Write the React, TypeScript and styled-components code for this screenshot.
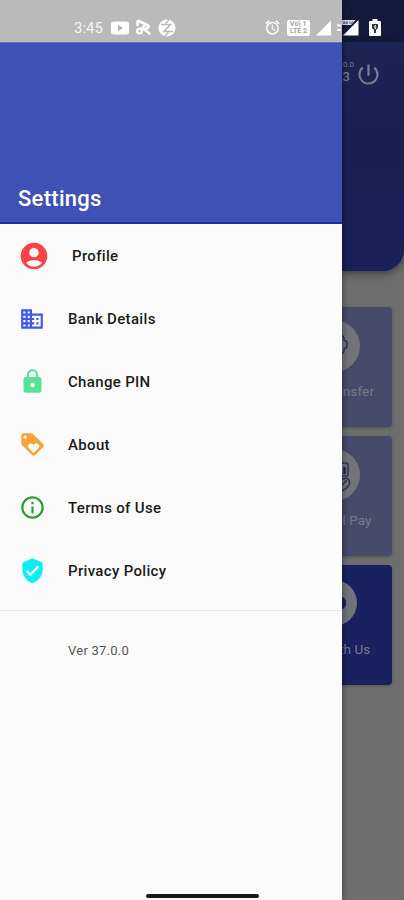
import React from "react";
import styled, { createGlobalStyle } from "styled-components";
import {
  MdAccountCircle,
  MdAlarm,
  MdDomain,
  MdInfoOutline,
  MdLock,
  MdLoyalty,
  MdPowerSettingsNew,
  MdVerifiedUser,
} from "react-icons/md";

const GlobalStyle = createGlobalStyle`
  * { box-sizing: border-box; }
  body { margin: 0; background: #6e6e6e; font-family: Roboto, sans-serif; }
`;

const Screen = styled.div`
  display: flex;
  width: 404px;
  height: 900px;
  overflow: hidden;
`;

const Drawer = styled.aside`
  position: relative;
  z-index: 1;
  display: flex;
  flex-direction: column;
  flex: 0 0 342px;
  background: #fbfbfb;
  box-shadow: 0 0 7px rgba(0, 0, 0, 0.5);
`;

const StatusBar = styled.div<{ $dark?: boolean }>`
  display: flex;
  align-items: center;
  flex: 0 0 42px;
  height: 42px;
  padding: ${(p) => (p.$dark ? "13px 0 0" : "13px 1px 0 74px")};
  background: ${(p) => (p.$dark ? "#151a3c" : "#bababa")};
  color: #fff;
  svg { display: block; flex: none; }
`;

const Clock = styled.span`
  width: 37px;
  font-size: 15px;
  line-height: 18px;
  color: #f4f4f4;
`;

const StatusGroup = styled.div<{ $gap: number; $end?: boolean }>`
  display: flex;
  align-items: center;
  gap: ${(p) => p.$gap}px;
  margin-left: ${(p) => (p.$end ? "auto" : "0")};
`;

const LteBadge = styled.span`
  display: grid;
  width: 23px;
  height: 16px;
  align-content: center;
  justify-content: center;
  border-radius: 2px;
  background: #fff;
  color: #a5a5a5;
  font-size: 7px;
  font-weight: 700;
  line-height: 7px;
  white-space: nowrap;
`;

const DrawerHeader = styled.header`
  display: flex;
  align-items: flex-end;
  flex: 0 0 182px;
  padding: 0 18px 10px;
  border-top: 1px solid #6571bd;
  border-bottom: 2px solid #1c2ca0;
  background: #4051b5;
`;

const Title = styled.h1`
  margin: 0;
  color: #fff;
  font-size: 22px;
  font-weight: 500;
  line-height: 26px;
  letter-spacing: 0.28px;
`;

const Menu = styled.nav`
  display: flex;
  flex-direction: column;
  padding-bottom: 8px;
  border-bottom: 1px solid #ececec;
`;

const MenuItem = styled.a<{ $color: string }>`
  display: flex;
  align-items: center;
  height: 63px;
  padding-left: 20px;
  svg { flex: none; color: ${(p) => p.$color}; display: block; }
`;

const IconSlot = styled.span<{ $wide?: boolean }>`
  display: flex;
  flex: none;
  width: ${(p) => (p.$wide ? 28 : 24)}px;
  margin-right: 24px;
  justify-content: center;
`;

const Label = styled.span`
  color: #1c1c1c;
  font-size: 15px;
  font-weight: 500;
  line-height: 20px;
  letter-spacing: 0.33px;
  white-space: nowrap;
`;

const Version = styled.p`
  margin: 31px 0 0 68px;
  color: #555;
  font-size: 13px;
  line-height: 18px;
  letter-spacing: 0.25px;
`;

const HomeBar = styled.div`
  width: 113px;
  height: 4px;
  margin: auto 0 2px 146px;
  border-radius: 2px;
  background: #161616;
`;

const Backdrop = styled.main`
  display: flex;
  flex-direction: column;
  flex: 0 0 62px;
  overflow: hidden;
  background: #6e6e6e;
`;

const HomeHeader = styled.section`
  display: flex;
  flex: 0 0 229px;
  align-items: flex-start;
  justify-content: flex-end;
  gap: 1px;
  padding: 18px 22px 0 0;
  border-radius: 0 0 21px 0;
  background: linear-gradient(#1b2453, #192153 40%, #192158);
  box-shadow: 0 2px 9px rgba(0, 0, 0, 0.5);
  color: #787b8b;
  svg { flex: none; margin-top: 1px; }
`;

const Build = styled.div`
  text-align: right;
  white-space: nowrap;
  small { display: block; font-size: 8px; line-height: 9px; }
  b { display: block; padding-right: 4px; font-size: 13px; font-weight: 500; line-height: 15px; }
`;

const Tiles = styled.section`
  display: flex;
  flex-direction: column;
  align-items: flex-end;
  gap: 9px;
  padding: 36px 12px 0 0;
`;

const Tile = styled.article<{ $solid?: boolean }>`
  display: flex;
  flex: none;
  flex-direction: column;
  align-items: center;
  width: 116px;
  height: 120px;
  padding-top: ${(p) => (p.$solid ? "15px" : "13px")};
  border-radius: 4px;
  background: ${(p) => (p.$solid ? "#1a2160" : "#474a69")};
  box-shadow: 0 1px 3px rgba(0, 0, 0, 0.25);
`;

const Disc = styled.div<{ $size: number }>`
  width: ${(p) => p.$size}px;
  height: ${(p) => p.$size}px;
  border-radius: 50%;
  background: #73747a;
  svg { display: block; width: 100%; height: 100%; }
`;

const TileLabel = styled.span<{ $top: number; $trim?: number }>`
  margin-top: ${(p) => p.$top}px;
  padding-right: ${(p) => p.$trim ?? 0}px;
  color: #777a88;
  font-size: 13.5px;
  font-weight: 400;
  line-height: 18px;
  letter-spacing: 0.1px;
  white-space: nowrap;
`;

const items = [
  { label: "Profile", icon: MdAccountCircle, color: "#fb4246", size: 32, wide: true },
  { label: "Bank Details", icon: MdDomain, color: "#3f57ec", size: 26 },
  { label: "Change PIN", icon: MdLock, color: "#55e495", size: 27 },
  { label: "About", icon: MdLoyalty, color: "#faa235", size: 27 },
  { label: "Terms of Use", icon: MdInfoOutline, color: "#2d9d32", size: 27 },
  { label: "Privacy Policy", icon: MdVerifiedUser, color: "#08eef5", size: 27 },
];

const YoutubeIcon = () => (
  <svg width="18" height="14" viewBox="0 0 18 14">
    <rect y="0.5" width="18" height="13" rx="3" fill="#fff" />
    <path d="M7 4v6l5-3z" fill="#b0b0b0" />
  </svg>
);

const ShareIcon = () => (
  <svg width="17" height="17" viewBox="0 0 17 17" fill="none" stroke="#fff" strokeLinejoin="round" strokeLinecap="round">
    <path d="M2.500 6V3q0-1.500 1.500-1L13 6.500q1.500 1 0 2L9.500 10.500" strokeWidth="2.600" />
    <circle cx="4.500" cy="12" r="2.400" strokeWidth="2.400" />
    <path d="M6.500 10.500L9 7M9.500 10.500l5 4" strokeWidth="2.400" />
  </svg>
);

const ZIcon = () => (
  <svg width="18" height="18" viewBox="0 0 18 18">
    <circle cx="9" cy="9" r="8.5" fill="#fff" />
    <path d="M3 5.500h9.500L6 12.500h9M11 1L7.500 4.500M10.500 13.500L7 17" fill="none" stroke="#b8b8b8" strokeWidth="1.500" />
  </svg>
);

const Signal = () => (
  <svg width="15" height="16" viewBox="0 0 15 16"><path d="M15 .5V15.500H0z" fill="#fff" /></svg>
);

const RoamingSignal = () => (
  <svg width="17" height="17" viewBox="0 0 17 17">
    <path d="M16.500 1V16.500H1z" fill="#fff" />
    <path d="M0 1h13.500L9 6H0z" fill="#dedfe5" />
    <path d="M2 2v3M5 2v3M8 2v3M11 2l-2 3M1 4h5" stroke="#151a3c" strokeWidth=".6" />
  </svg>
);

const BatteryIcon = () => (
  <svg width="12" height="17" viewBox="0 0 12 17">
    <path d="M3.500 0h5v2H11q1 0 1 1v13q0 1-1 1H1q-1 0-1-1V3q0-1 1-1h2.500z" fill="#fff" />
    <path d="M3 5h6v4L7 11v3H5v-3L3 9z" fill="#303449" />
    <path d="M6.500 6L5.500 8h1.500l-1 2" fill="none" stroke="#fff" />
  </svg>
);

const MenuRow = ({ item }: { item: (typeof items)[number] }) => (
  <MenuItem $color={item.color}>
    <IconSlot $wide={item.wide}><item.icon size={item.size} /></IconSlot>
    <Label>{item.label}</Label>
  </MenuItem>
);

export default function App() {
  return (
    <>
      <GlobalStyle />
      <Screen>
        <Drawer>
          <StatusBar>
            <Clock>3:45</Clock>
            <StatusGroup $gap={6}>
              <YoutubeIcon />
              <ShareIcon />
              <ZIcon />
            </StatusGroup>
            <StatusGroup $gap={6} $end>
              <MdAlarm size={17} />
              <LteBadge><span>Vo) 1</span><span>LTE 2</span></LteBadge>
              <StatusGroup $gap={6}>
                <Signal />
                <svg width="4" height="8" viewBox="0 0 4 8"><path d="M0 1.500h4M0 6h4" stroke="#fff" strokeWidth="2" /></svg>
              </StatusGroup>
            </StatusGroup>
          </StatusBar>
          <DrawerHeader><Title>Settings</Title></DrawerHeader>
          <Menu>{items.map((item) => <MenuRow key={item.label} item={item} />)}</Menu>
          <Version>Ver 37.0.0</Version>
          <HomeBar />
        </Drawer>
        <Backdrop>
          <StatusBar $dark>
            <StatusGroup $gap={10}>
              <RoamingSignal />
              <BatteryIcon />
            </StatusGroup>
          </StatusBar>
          <HomeHeader>
            <Build><small>37.0.0</small><b>123</b></Build>
            <MdPowerSettingsNew size={27} />
          </HomeHeader>
          <Tiles>
            <Tile>
              <Disc $size={52}>
                <svg viewBox="0 0 52 52" fill="none" stroke="#303451" strokeWidth="1.500">
                  <path d="M31 15q4 0 5 3v2l3 2v5l-3 2v2q-1 3-5 3" />
                </svg>
              </Disc>
              <TileLabel $top={10} $trim={4}>Fund Transfer</TileLabel>
            </Tile>
            <Tile>
              <Disc $size={52}>
                <svg viewBox="0 0 52 52" fill="none" stroke="#303451" strokeWidth="1.500">
                  <path d="M30 14h8q2 0 2 2v10q0 1-2 1h-8" />
                  <path d="M36.500 18v7" stroke="#1d2562" strokeWidth="2.500" />
                  <path d="M30 31l9-2q4 3 2 7t-8 6h-3M34 36l5-5" />
                </svg>
              </Disc>
              <TileLabel $top={10}>External Pay</TileLabel>
            </Tile>
            <Tile $solid>
              <Disc $size={46}>
                <svg viewBox="0 0 46 46"><rect x="14" y="17" width="21" height="12" rx="5" fill="#1a2160" /></svg>
              </Disc>
              <TileLabel $top={14} $trim={6}>Chat With Us</TileLabel>
            </Tile>
          </Tiles>
        </Backdrop>
      </Screen>
    </>
  );
}
